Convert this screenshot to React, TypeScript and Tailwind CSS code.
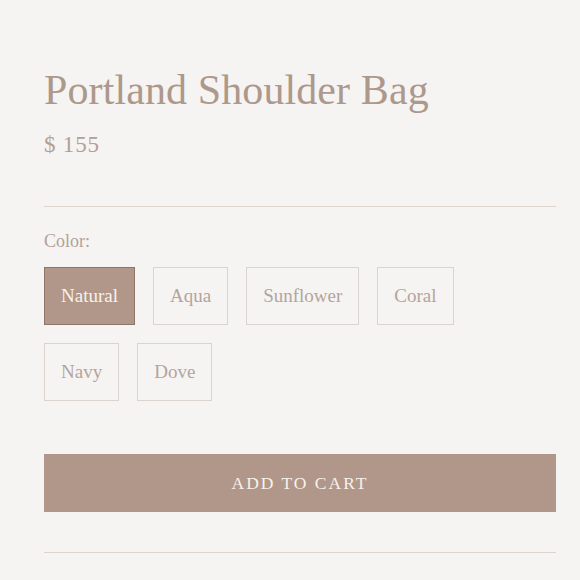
import React from "react";

const colors = ["Natural", "Aqua", "Sunflower", "Coral", "Navy", "Dove"];

export default function App() {
  const selected = "Natural";
  return (
    <div
      className="min-h-[580px] w-full bg-[#f6f4f2] pl-[44px] pr-[24px] pt-[64px] text-[#b09a8e]"
      style={{ fontFamily: '"Liberation Serif", "DejaVu Serif", serif' }}
    >
      <h1 className="text-[42px] leading-[52px] tracking-[0.1px] text-[#ad988c]">
        Portland Shoulder Bag
      </h1>
      <div className="mt-[16px] text-[23px] leading-[26px] tracking-[0.8px] text-[#b3a094]">
        $ 155
      </div>
      <div className="mt-[48px] h-px w-full bg-[#ddd4ce]" />
      <div className="mt-[24px] text-[18px] leading-[20px] text-[#b3a197]">Color:</div>
      <div className="mt-[16px] flex w-[440px] flex-wrap gap-x-[18px] gap-y-[18px]">
        {colors.map((c) => {
          const active = c === selected;
          return (
            <button
              key={c}
              className={
                active
                  ? "h-[58px] border border-[#8d7568] bg-[#b09789] px-[16px] text-[19px] text-[#f8f1ec]"
                  : "h-[58px] border border-[#dbd3cd] bg-transparent px-[16px] text-[19px] text-[#b3a49c]"
              }
            >
              {c}
            </button>
          );
        })}
      </div>
      <button className="mt-[53px] flex h-[58px] w-full items-center justify-center bg-[#b09789] text-[17.5px] tracking-[2px] text-[#f8f1ec]">
        ADD TO CART
      </button>
      <div className="mt-[40px] h-px w-full bg-[#ddd4ce]" />
    </div>
  );
}
